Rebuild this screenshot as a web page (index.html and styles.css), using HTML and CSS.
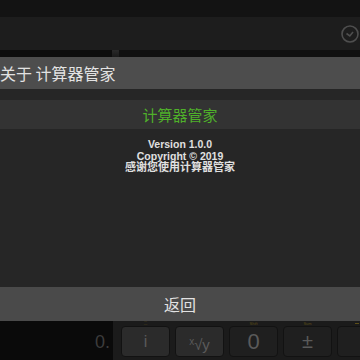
FILE: index.html
```html
<!DOCTYPE html>
<html lang="zh">
<head>
<meta charset="utf-8">
<link rel="stylesheet" href="styles.css">
</head>
<body>
<div class="status"></div>
<div class="toolbar">
  <svg class="clock" width="18" height="18" viewBox="0 0 18 18"><circle cx="9" cy="9" r="8" fill="none" stroke="#4e4e4e" stroke-width="1.6"/><path d="M5.5 8.5 L8.8 11 L12 7" fill="none" stroke="#4e4e4e" stroke-width="1.6"/></svg>
</div>
<div class="strip"><div class="strip-left"></div><div class="strip-div"></div><div class="strip-right"></div></div>
<div class="dialog">
  <div class="title">关于 计算器管家</div>
  <div class="gap"></div>
  <div class="band">计算器管家</div>
  <div class="body">
    <div class="line">Version 1.0.0</div>
    <div class="line">Copyright © 2019</div>
    <div class="line">感谢您使用计算器管家</div>
  </div>
  <div class="buttons">返回</div>
</div>
<div class="calc">
  <div class="display">0.</div>
  <div class="keys">
    <div class="key light"><span class="lbl">二</span>i</div>
    <div class="key light xy"><sup>x</sup>√y</div>
    <div class="key dark zero"><span class="lbl">Shift</span>0</div>
    <div class="key dark pm"><span class="lbl">Sum</span>±</div>
    <div class="key dark"><span class="mark"></span></div>
  </div>
</div>
</body>
</html>
```
FILE: styles.css
```css
html, body {
  margin: 0;
  padding: 0;
  width: 360px;
  height: 360px;
  overflow: hidden;
  background: #111;
  font-family: "Liberation Sans", "Noto Sans CJK SC", sans-serif;
}
.status {
  height: 17px;
  background: #131313;
}
.toolbar {
  height: 33px;
  background: #1d1d1d;
  display: flex;
  align-items: center;
  justify-content: flex-end;
}
.clock {
  margin-right: 1px;
  margin-top: 1px;
}
.strip {
  height: 7px;
  display: flex;
}
.strip-left { width: 112px; background: #0d0d0d; }
.strip-div { width: 7px; background: linear-gradient(#2a2a2a, #1a1a1a); }
.strip-right { flex: 1; background: #111; }

.dialog {
  display: flex;
  flex-direction: column;
}
.title {
  height: 32px;
  background: #4d4d4d;
  color: #e2e2e2;
  font-size: 16px;
  line-height: 32px;
  white-space: nowrap;
  font-family: "Noto Sans CJK SC", sans-serif;
}
.gap {
  height: 11px;
  background: #262626;
}
.band {
  height: 29px;
  background: #333;
  color: #4fb02a;
  font-size: 15px;
  line-height: 29px;
  text-align: center;
  font-family: "Noto Sans CJK SC", sans-serif;
}
.body {
  height: 148px;
  padding-top: 10px;
  background: #262626;
  display: flex;
  flex-direction: column;
  align-items: center;
}
.line {
  color: #e0e0e0;
  font-weight: bold;
  font-size: 10.5px;
  line-height: 11.5px;
}
.line:last-child {
  font-size: 11px;
}
.buttons {
  height: 34px;
  background: #4a4a4a;
  color: #e2e2e2;
  font-size: 16px;
  line-height: 34px;
  text-align: center;
  font-family: "Noto Sans CJK SC", sans-serif;
}
.calc {
  height: 39px;
  display: flex;
  background: #1b1b1b;
}
.display {
  flex: 0 0 110px;
  padding-right: 3px;
  background: #0a0a0a;
  color: #3c3c3c;
  font-size: 18px;
  text-align: right;
  line-height: 42px;
}
.keys {
  flex: 1;
  min-width: 0;
  overflow: hidden;
  display: flex;
  gap: 5px;
  padding: 5px 0 0 8px;
}
.key {
  position: relative;
  flex: 0 0 49px;
  height: 31px;
  box-sizing: border-box;
  border: 1px solid #121212;
  border-radius: 4px;
  color: #5a5a5a;
  font-size: 16px;
  line-height: 29px;
  text-align: center;
}
.light { background: #2b2b2b; }
.dark { background: #1f1f1f; }
.xy { font-size: 15px; }
.xy sup { font-size: 10px; vertical-align: 5px; }
.zero { font-size: 22px; font-weight: 300; }
.pm { font-size: 20px; }
.lbl {
  position: absolute;
  top: -5px;
  left: 0;
  right: 0;
  font-size: 4px;
  line-height: 4px;
  color: #5c4e18;
}
.mark {
  position: absolute;
  top: -4px;
  left: 17px;
  width: 4px;
  height: 1px;
  background: #5c4e18;
}
```
